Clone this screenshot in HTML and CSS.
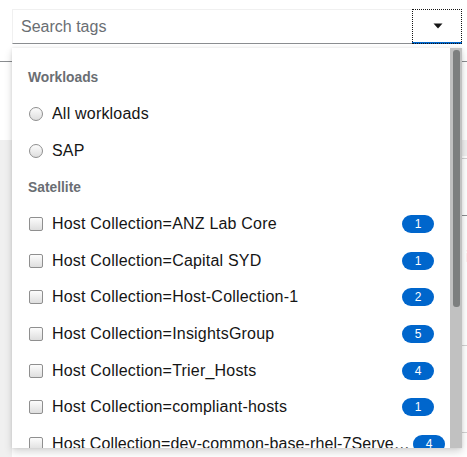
FILE: index.html
```html
<!DOCTYPE html>
<html lang="en">
<head>
<meta charset="utf-8">
<title>Search tags</title>
<link rel="stylesheet" href="styles.css">
</head>
<body>
<div class="page">
  <div class="toolbar"></div>
  <div class="gap"></div>
  <div class="content">
    <div class="side"></div>
    <div class="table">
      <div class="thead"></div>
      <div class="trow r1"></div>
      <div class="trow r2"></div>
      <div class="trow r3"><span class="link">il</span></div>
      <div class="trow r4"></div>
    </div>
  </div>
</div>

<div class="select">
  <div class="typeahead">
    <input class="search" type="text" placeholder="Search tags">
    <button class="toggle" type="button" aria-label="Toggle">
      <svg width="10" height="6" viewBox="0 0 10 6"><path d="M0.5 0.5h9L5 5.5z" fill="#151515"/></svg>
    </button>
  </div>
  <div class="menu">
    <div class="list">
      <div class="group">Workloads</div>
      <div class="item"><span class="radio"></span><span class="label">All workloads</span></div>
      <div class="item"><span class="radio"></span><span class="label">SAP</span></div>
      <div class="group">Satellite</div>
      <div class="item"><span class="check"></span><span class="label">Host Collection=ANZ Lab Core</span><span class="badge">1</span></div>
      <div class="item"><span class="check"></span><span class="label">Host Collection=Capital SYD</span><span class="badge">1</span></div>
      <div class="item"><span class="check"></span><span class="label">Host Collection=Host-Collection-1</span><span class="badge">2</span></div>
      <div class="item"><span class="check"></span><span class="label">Host Collection=InsightsGroup</span><span class="badge">5</span></div>
      <div class="item"><span class="check"></span><span class="label">Host Collection=Trier_Hosts</span><span class="badge">4</span></div>
      <div class="item"><span class="check"></span><span class="label">Host Collection=compliant-hosts</span><span class="badge">1</span></div>
      <div class="item item-long"><span class="check"></span><span class="label">Host Collection=dev-common-base-rhel-7Server-x86_64</span><span class="badge">4</span></div>
      <div class="item"><span class="check"></span><span class="label">Host Collection=prod</span><span class="badge">3</span></div>
    </div>
    <div class="scrollbar"><div class="thumb"></div></div>
  </div>
</div>
</body>
</html>
```

FILE: styles.css
```css
* { box-sizing: border-box; }
html, body { margin: 0; padding: 0; }
body {
  width: 467px;
  height: 457px;
  overflow: hidden;
  background: #fff;
  font-family: "Liberation Sans", Arial, sans-serif;
  color: #151515;
  position: relative;
}

/* background page */
.page { display: flex; flex-direction: column; height: 457px; }
.toolbar { height: 62px; border-bottom: 1px solid #8a8d90; }
.gap { height: 78px; }
.content { flex: 1; display: grid; grid-template-columns: 12px 1fr; }
.side { background: #f0f0f0; }
.table { display: flex; flex-direction: column; }
.thead { height: 16px; background: #f0f0f0; }
.trow { border-bottom: 1px solid #d2d2d2; position: relative; }
.r1 { height: 3px; }
.r2 { height: 57px; border-bottom-color: #8a8d90; }
.r3 { height: 130px; }
.r4 { height: 87px; }
.link {
  position: absolute;
  right: -6px;
  top: 32px;
  color: #06c;
  font-size: 16px;
}

/* select overlay */
.select {
  position: absolute;
  left: 12px;
  top: 9px;
  width: 450px;
}
.typeahead {
  display: flex;
  height: 35px;
  border: 1px solid #f0f0f0;
  border-bottom: 1px solid #8a8d90;
  background: #fff;
}
.search {
  flex: 1;
  min-width: 0;
  border: 0;
  outline: 0;
  padding: 0 8px;
  font: 16px "Liberation Sans", Arial, sans-serif;
  color: #151515;
  background: transparent;
}
.search::placeholder { color: #6a6e73; }
.toggle {
  width: 50px;
  margin: -1px -1px -1px 0;
  height: 35px;
  border: 0;
  padding: 0;
  background: #fff;
  outline: 1px dotted #151515;
  outline-offset: -1px;
  border-bottom: 2px solid #06c;
  display: flex;
  align-items: center;
  justify-content: center;
  padding-left: 2px;
}

.menu {
  margin-top: 4px;
  height: 400px;
  background: #fff;
  box-shadow: 0 4px 8px rgba(3, 3, 3, 0.16), 0 0 3px rgba(3, 3, 3, 0.1);
  display: flex;
  overflow: hidden;
}
.list {
  flex: 1;
  min-width: 0;
  padding-top: 10.8px;
}
.group {
  height: 36.7px;
  display: flex;
  align-items: center;
  padding: 0 16px;
  font-size: 13.8px;
  font-weight: 700;
  color: #6a6e73;
}
.item {
  height: 36.7px;
  display: flex;
  align-items: center;
  padding: 0 16px 0 17px;
  font-size: 16px;
}
.radio {
  flex: none;
  width: 14px;
  height: 14px;
  border-radius: 50%;
  border: 1px solid #8f8f8f;
  background: linear-gradient(#fcfcfc, #dedede);
  margin-right: 9px;
}
.check {
  flex: none;
  width: 14px;
  height: 14px;
  border-radius: 2px;
  border: 1px solid #8f8f8f;
  background: linear-gradient(#fcfcfc, #dedede);
  margin-right: 9px;
}
.label {
  flex: 1;
  min-width: 0;
  white-space: nowrap;
  overflow: hidden;
  text-overflow: ellipsis;
  letter-spacing: 0.2px;
}
.badge {
  flex: none;
  width: 32px;
  height: 18px;
  border-radius: 30px;
  background: #06c;
  color: #fff;
  font-size: 12px;
  display: flex;
  align-items: center;
  justify-content: center;
  margin-left: 8px;
}
.item-long .label { flex: none; width: 361px; letter-spacing: 0.1px; }
.item-long .badge { margin-left: 0; }

.scrollbar {
  flex: none;
  width: 12px;
  background: #c1c1c1;
  padding: 2px 2px 0 3px;
}
.thumb {
  height: 257px;
  background: #7d7f7f;
  border-radius: 3px;
}
```
